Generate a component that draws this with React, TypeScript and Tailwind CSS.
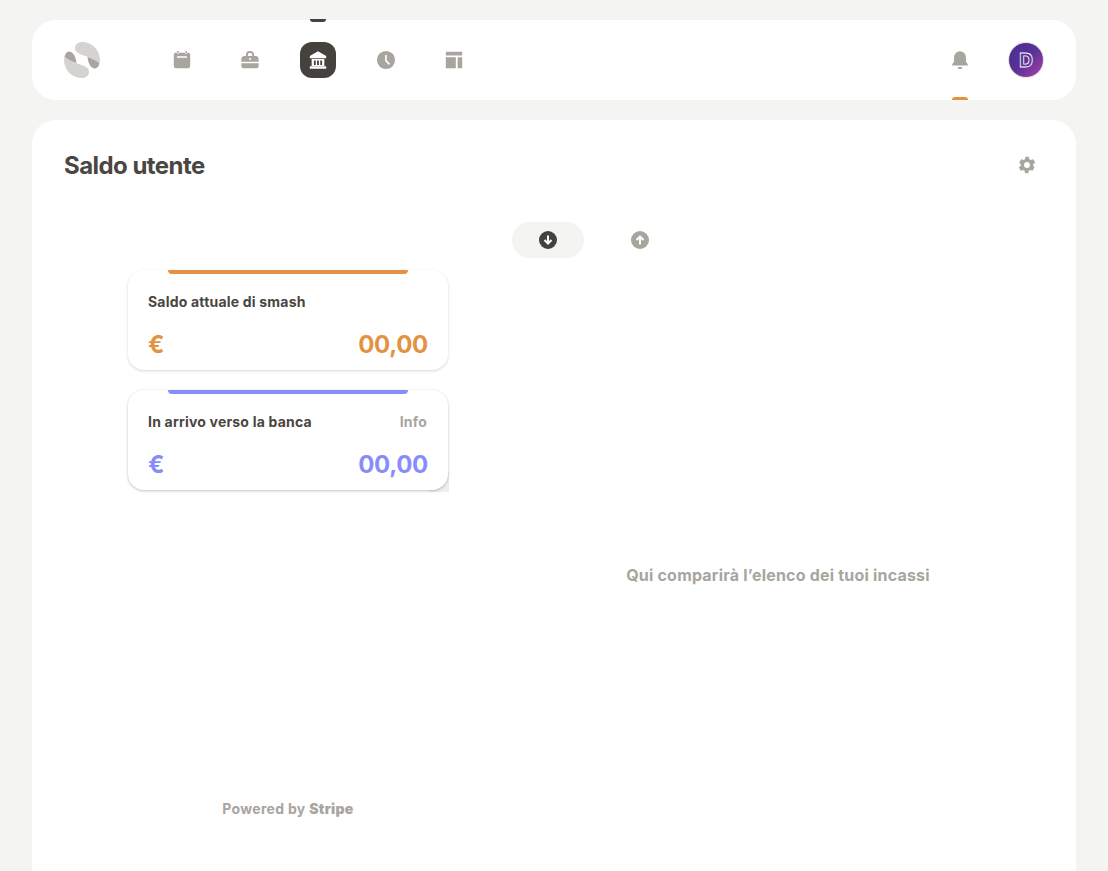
const navIcons = [
  // calendar
  <path key="cal" d="M6.500 2h1.800v3H6.500zM15.700 2h1.800v3h-1.800zM5 4h14a2 2 0 0 1 2 2v13a2 2 0 0 1-2 2H5a2 2 0 0 1-2-2V6a2 2 0 0 1 2-2zm1.500 4v1.600h11V8z" fillRule="evenodd" />,
  // briefcase
  <path key="bag" d="M7.500 7.500V6c0-2.200 1.800-4 4-4h1c2.200 0 4 1.800 4 4v1.500H18a3.500 3.500 0 0 1 3.500 3.500v3H2.500v-3A3.500 3.500 0 0 1 6 7.500zm2.200 0h4.600V6c0-1-.8-1.800-1.800-1.800h-1c-1 0-1.800.8-1.800 1.800zM2.500 15.500h19V19a2 2 0 0 1-2 2h-15a2 2 0 0 1-2-2zM11 9.800h2v2h-2z" fillRule="evenodd" />,
  // bank
  <path key="bank" d="M12 2.500 3 7.500V10h18V7.500zM5 11v7.500h14V11zm2.500 1.500h2v5h-2zm3.500 0h2v5h-2zm3.500 0h2v5h-2zM3 19h18v2.500H3z" fillRule="evenodd" />,
  // clock
  <path key="clock" d="M12 2a10 10 0 1 0 0 20 10 10 0 0 0 0-20zm-1 4.500h1.800v5.700l3.700 4-1.300 1.300L11 13z" fillRule="evenodd" />,
  // layout
  <path key="layout" d="M3 3h18v4H3zM3 9h11v12H3zM16 9h5v12h-5z" />,
];

function Logo() {
  const lobe = "M11 6C11 2 15 0 18 0C28 0 36 8 36 18L35.600 21C31 18 26 15.500 20 13.500C15 12 11 10 11 6Z";
  const wedge = "M23.500 15C28 16.500 32 18.500 35.500 21C35 24 33.500 26 31.500 26.500C27 27 24 21 23.500 15Z";
  return (
    <svg viewBox="0 0 36 36" className="w-9 h-9 shrink-0">
      <path d={lobe} fill="#d4d3d0" />
      <path d={wedge} fill="#a8a59f" />
      <g transform="rotate(180 18 18)">
        <path d={lobe} fill="#d4d3d0" />
        <path d={wedge} fill="#a8a59f" />
      </g>
    </svg>
  );
}

function BalanceCard({ title, color, bar, info, shadow }: { title: string; color: string; bar: string; info?: boolean; shadow: string }) {
  return (
    <div className="relative">
      {info && <div className="absolute bottom-[-2px] right-[-1px] h-5 w-5 bg-[#f0efee]" />}
      <div className={`relative h-[100px] rounded-2xl bg-white px-5 ${shadow}`}>
        <div className={`absolute left-10 right-10 top-0 h-1 rounded-b-[4px] ${bar}`} />
        <div className="flex justify-between pt-[23px] text-sm font-bold leading-[17px] tracking-[0.2px]">
          <span className="text-[#4a4642]">{title}</span>
          {info && <span className="mr-px text-[#a8a59f]">Info</span>}
        </div>
        <div className={`mt-[18px] flex items-center justify-between text-2xl font-bold leading-[34px] tracking-[-0.3px] ${color}`}>
          <span>€</span>
          <span>00,00</span>
        </div>
      </div>
    </div>
  );
}

export default function App() {
  return (
    <div className="h-[871px] overflow-hidden bg-[#f4f4f2] px-8 pt-5 font-['Inter',sans-serif]">
      <header className="relative flex h-20 items-center rounded-3xl bg-white px-8">
        <div className="absolute left-[278px] top-[-1px] h-[3px] w-4 rounded-b-[4px] bg-[#45413c]" />
        <Logo />
        <nav className="ml-16 flex gap-8">
          {navIcons.map((icon, i) => (
            <div key={i} className={`flex h-9 w-9 items-center justify-center rounded-xl ${i === 2 ? "bg-[#45413c] text-white" : "text-[#a8a59f]"}`}>
              <svg viewBox="1 1 22 22" fill="currentColor" className="h-5 w-5">
                {icon}
              </svg>
            </div>
          ))}
        </nav>
        <div className="ml-auto flex items-center gap-[30px]">
          <div className="relative flex h-9 w-9 items-center justify-center text-[#a8a59f]">
            <svg viewBox="0 0 24 24" fill="currentColor" className="h-[22px] w-[22px]">
              <path d="M12 2.500a6.500 6.500 0 0 0-6.500 6.500v5L3.500 16.500V18h17v-1.500L18.500 14V9A6.500 6.500 0 0 0 12 2.500zM9.500 19.500h5a2.500 2.500 0 0 1-5 0z" />
            </svg>
            <div className="absolute bottom-[-22px] left-2.5 h-[3px] w-4 rounded-t-[4px] bg-[#e29243]" />
          </div>
          <div className="flex h-9 w-9 items-center justify-center rounded-full border border-[#e4e2e0] bg-gradient-to-br from-[#46308f] via-[#5a3196] to-[#ab40a8]">
            <span className="text-[19px] font-extrabold leading-none text-transparent [-webkit-text-stroke:0.8px_white]">D</span>
          </div>
        </div>
      </header>

      <main className="mt-5 h-[780px] rounded-t-3xl bg-white pt-[30px]">
        <div className="flex items-center justify-between pl-8 pr-[39px]">
          <h1 className="text-2xl font-bold leading-8 tracking-[-0.55px] text-[#4a4642]">Saldo utente</h1>
          <svg viewBox="0 0 24 24" fill="currentColor" className="-mt-0.5 h-5 w-5 text-[#a8a59f]">
            <path d="M19.400 13c.1-.3.1-.7.1-1s0-.7-.1-1l2.100-1.600c.2-.2.2-.4.1-.6l-2-3.500c-.1-.2-.4-.3-.6-.2l-2.500 1c-.5-.4-1.100-.7-1.700-1L14 2.400c0-.2-.3-.4-.5-.4h-3c-.2 0-.5.2-.5.400l-.4 2.700c-.6.3-1.200.6-1.700 1l-2.500-1c-.2-.1-.5 0-.6.2l-2 3.500c-.1.2-.1.4.1.6L4.600 11c-.1.300-.1.700-.1 1s0 .7.1 1l-2.100 1.600c-.2.2-.2.400-.1.6l2 3.500c.1.2.4.3.6.2l2.500-1c.5.4 1.100.7 1.700 1l.4 2.700c0 .2.3.4.5.4h3c.2 0 .5-.2.5-.4l.4-2.700c.6-.3 1.200-.6 1.700-1l2.500 1c.2.1.5 0 .6-.2l2-3.500c.1-.2.1-.4-.1-.6zM12 15.500a3.500 3.500 0 1 1 0-7 3.500 3.500 0 0 1 0 7z" />
          </svg>
        </div>

        <div className="ml-[480px] mt-10 flex gap-5">
          <div className="flex h-9 w-[72px] items-center justify-center rounded-full bg-[#f4f4f2] text-[#45413c]">
            <svg viewBox="0 0 18 18" className="h-[18px] w-[18px]">
              <circle cx="9" cy="9" r="9" fill="currentColor" />
              <path d="M9 4.500v8M5.500 9 9 12.500 12.500 9" stroke="white" strokeWidth="2" fill="none" />
            </svg>
          </div>
          <div className="flex h-9 w-[72px] items-center justify-center text-[#a8a59f]">
            <svg viewBox="0 0 18 18" className="h-[18px] w-[18px]">
              <circle cx="9" cy="9" r="9" fill="currentColor" />
              <path d="M9 13.500v-8M5.500 9 9 5.500 12.500 9" stroke="white" strokeWidth="2" fill="none" />
            </svg>
          </div>
        </div>

        <div className="mt-3 flex pl-24">
          <div className="w-80">
            <div className="flex flex-col gap-5">
              <BalanceCard title="Saldo attuale di smash" color="text-[#e29243]" bar="bg-[#e29243]" shadow="shadow-[0_1px_3px_rgba(0,0,0,0.16)]" />
              <BalanceCard title="In arrivo verso la banca" color="text-[#858dfa]" bar="bg-[#858dfa]" info shadow="shadow-[0_1px_3px_rgba(0,0,0,0.25)]" />
            </div>
            <p className="mt-[310px] text-center text-sm font-bold leading-[17px] tracking-[0.3px] text-[#a8a59f]">
              Powered by <span className="font-black">Stripe</span>
            </p>
          </div>
          <div className="ml-8 flex-1 pt-[295px] text-center text-base font-bold leading-[20px] tracking-[0.2px] text-[#a8a59f]">
            Qui comparirà l’elenco dei tuoi incassi
          </div>
        </div>
      </main>
    </div>
  );
}
